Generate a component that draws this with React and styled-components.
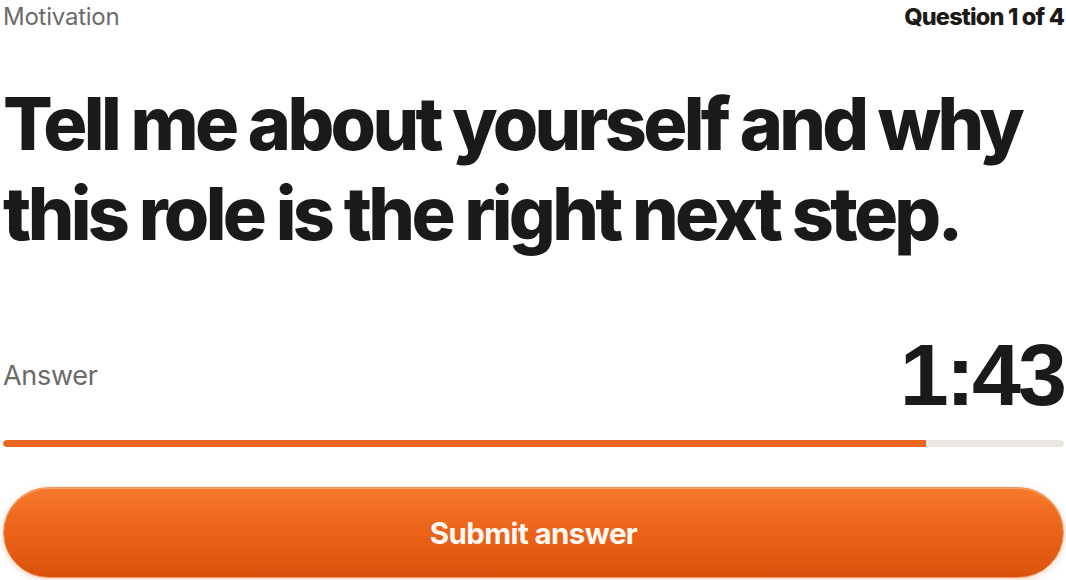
import styled, { createGlobalStyle } from "styled-components";

const GlobalStyle = createGlobalStyle`
    html, body {
        margin: 0;
        padding: 0;
        background: #ffffff;
    }
    body {
        font-family: Inter, "Liberation Sans", sans-serif;
        color: #1b1a18;
    }
`

const Page = styled.div`
    width: 1066px;
    height: 580px;
    padding: 0 2px 0 3px;
    box-sizing: border-box;
    display: flex;
    flex-direction: column;
    overflow: hidden;
`

const TopRow = styled.div`
    display: flex;
    justify-content: space-between;
    align-items: center;
    height: 32px;
`

const Category = styled.div`
    font-size: 24px;
    font-weight: 400;
    color: #6b6a67;
    letter-spacing: -0.01em;
`

const Counter = styled.div`
    font-size: 23.5px;
    font-weight: 800;
    letter-spacing: -0.035em;
    color: #1b1a18;
`

const Question = styled.h1`
    margin: 47px 0 0 0;
    font-size: 73.5px;
    line-height: 90px;
    font-weight: 800;
    letter-spacing: -0.05em;
    color: #1b1a18;
`

const AnswerRow = styled.div`
    display: flex;
    justify-content: space-between;
    align-items: center;
    margin-top: 74px;
    height: 84px;
`

const Label = styled.div`
    font-size: 27px;
    color: #6b6a67;
    letter-spacing: -0.01em;
`

const Timer = styled.div`
    font-family: "Liberation Sans", Arial, sans-serif;
    font-size: 88px;
    font-weight: 700;
    letter-spacing: -3px;
    line-height: 1;
    color: #1b1a18;
`

const Track = styled.div`
    margin-top: 23px;
    height: 7px;
    border-radius: 4px;
    background: #ebe8e4;
    overflow: hidden;
`

const Fill = styled.div`
    height: 100%;
    background: #e8661f;
    border-radius: 4px 0 0 4px;
`

const SubmitButton = styled.button`
    margin-top: 40px;
    height: 91px;
    width: 100%;
    border-radius: 46px;
    border: 1.5px solid #f3955a;
    background: linear-gradient(180deg, #f67a2c 0%, #eb6218 50%, #db520c 100%);
    box-shadow: 0 2px 6px rgba(232, 100, 30, 0.25), inset 0 1px 0 rgba(255, 190, 140, 0.6);
    color: #fff8f2;
    font-family: Inter, "Liberation Sans", sans-serif;
    font-size: 29.5px;
    font-weight: 700;
    letter-spacing: -0.02em;
    cursor: pointer;
`

const progress = 923 / 1061

const App = () => {
    return (
        <Page>
            <GlobalStyle />
            <TopRow>
                <Category>Motivation</Category>
                <Counter>Question 1 of 4</Counter>
            </TopRow>
            <Question>
                Tell me about yourself and why
                <br />
                this role is the right next step.
            </Question>
            <AnswerRow>
                <Label>Answer</Label>
                <Timer>1:43</Timer>
            </AnswerRow>
            <Track>
                <Fill style={{ width: `${progress * 100}%` }} />
            </Track>
            <SubmitButton>Submit answer</SubmitButton>
        </Page>
    )
}

export default App;
